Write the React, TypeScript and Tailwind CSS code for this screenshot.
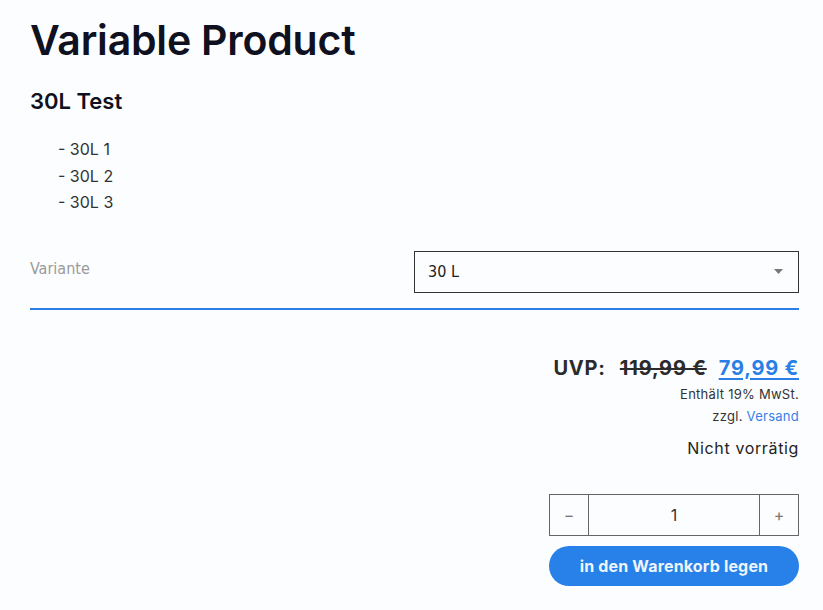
export default function App() {
    return (
        <div className="min-h-[610px] bg-[#fcfdfe] text-[#1a1a2a] font-['Inter','Noto_Sans',sans-serif]">
            <div className="pl-[30px] pr-[24px] pt-[14px]">
                <h1 className="text-[41px] leading-[52px] font-semibold tracking-[-0.005em] text-[#0f1020]">Variable Product</h1>

                <h2 className="mt-[21px] text-[22px] leading-[28px] font-semibold text-[#0f1020]">30L Test</h2>

                <ul className="mt-[21px] pl-[28px] text-[16px] leading-[26.5px] text-[#333]">
                    <li>- 30L 1</li>
                    <li>- 30L 2</li>
                    <li>- 30L 3</li>
                </ul>

                <div className="mt-[35px] flex items-start justify-between border-b-2 border-[#2a7fe6] pb-[15px]">
                    <label className="pt-[6px] text-[16px] text-[#9a9a9a] font-['DejaVu_Sans_Condensed','Liberation_Sans',sans-serif]">Variante</label>
                    <div className="flex h-[42px] w-[385px] items-center justify-between border border-[#333] bg-[#fcfdfe] pl-[13px] pr-[15px]">
                        <span className="text-[16px] text-[#222] font-['DejaVu_Sans_Condensed','Liberation_Sans',sans-serif]">30 L</span>
                        <svg width="9" height="5" viewBox="0 0 9 5"><path d="M0 0h9L4.5 5z" fill="#777" /></svg>
                    </div>
                </div>

                <div className="mt-[44px] flex flex-col items-end">
                    <div className="flex items-baseline text-[20px] font-bold leading-[28px] tracking-[0.04em]">
                        <span className="text-[#2b2b2b]">UVP:</span>
                        <span className="ml-[14px] text-[#2b2b2b] line-through">119,99 €</span>
                        <span className="ml-[12px] text-[#2a7fe6] underline underline-offset-[3px]">79,99 €</span>
                    </div>
                    <p className="mt-[1px] text-[13px] leading-[22px] tracking-[0.02em] text-[#333]">Enthält 19% MwSt.</p>
                    <p className="text-[13px] leading-[22px] tracking-[0.02em] text-[#333]">zzgl. <span className="text-[#3a7ee8]">Versand</span></p>
                    <p className="mt-[10px] text-[16px] leading-[22px] tracking-[0.04em] text-[#222]">Nicht vorrätig</p>

                    <div className="mt-[35px] flex h-[42px] w-[250px] border border-[#666]">
                        <button className="w-[39px] border-r border-[#666] text-[16px] text-[#777]">−</button>
                        <div className="flex flex-1 items-center justify-center text-[16px] text-[#333]">1</div>
                        <button className="w-[39px] border-l border-[#666] text-[16px] text-[#777]">+</button>
                    </div>
                    <button className="mt-[10px] h-[40px] w-[250px] rounded-full bg-[#2781e8] text-[16px] font-bold tracking-[0.01em] text-[#eef4fc]">in den Warenkorb legen</button>
                </div>
            </div>
        </div>
    );
}
